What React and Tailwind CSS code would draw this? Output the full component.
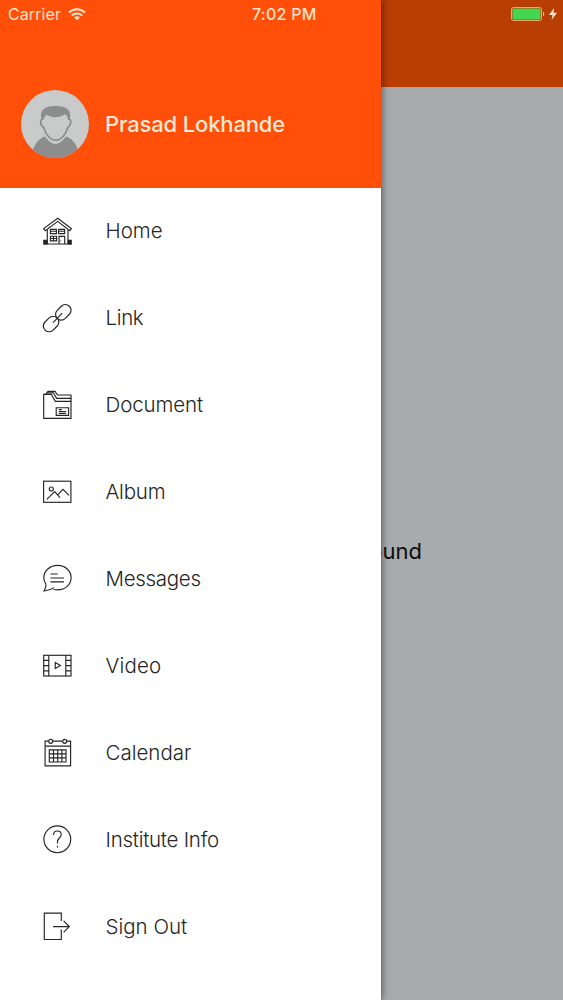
import React from 'react';

const HomeIcon = () => (
  <>
    <path d="M1.6 12.6 L15.7 2.2 L29.4 12.6 L27.8 14.6 L15.7 5.4 L3.3 14.6 Z" />
    <path d="M5.3 13.4 V28 M26 13.4 V28 M1.5 28 H29.5" />
    <path d="M8.4 13.4 h6 v4.2 h-6 Z M16.6 13.4 h6 v4.2 h-6 Z M8.4 15.2 h6 M16.6 15.2 h6" />
    <path d="M8.4 20.2 h6.2 v4.6 h-6.2 Z M11.5 20.2 v4.6 M8.4 22.5 h6.2" />
    <path d="M17 28 V20.4 H22.7 V28 M18.6 24.5 v0.8" />
    <path d="M1.8 24.4 h3.2 v3.4 h-3.2 Z M26.2 24.4 h3 v3.4 h-3 Z" fill="currentColor" />
  </>
);

const LinkIcon = () => (
  <>
    <rect x="12.7" y="3.6" width="17.2" height="11.4" rx="5.7" transform="rotate(-45 21.3 9.3)" />
    <rect x="0.5" y="15.3" width="17.2" height="11.4" rx="5.7" transform="rotate(-45 9.1 21)" />
    <path d="M11 19.7 L20.2 10.2" />
  </>
);

const DocumentIcon = () => (
  <>
    <path d="M1.7 28.3 V4.3 H9.3 L13.3 11.3 H29 V28.3 Z" />
    <path d="M3.3 4.3 L4.9 2.8 H11.4 L14.6 8.4 H29 V11.3" />
    <path d="M5 2.7 L6 1.4 H13 L15.6 5 H29 V8.4" />
    <path d="M14.2 17.7 h12.4 v7.6 h-12.4 Z M16.8 19.6 h3 M16.8 21.5 h7.3 M16.8 23.4 h7.3" />
  </>
);

const AlbumIcon = () => (
  <>
    <rect x="1.6" y="4.2" width="27.3" height="21.1" />
    <circle cx="9.3" cy="12" r="2" />
    <path d="M4.8 22.3 L12.7 14.7 L18 20.6 M16 17.6 L21 12.4 L27 18.4" />
  </>
);

const MessagesIcon = () => (
  <>
    <path d="M4.1 20.4 C2.6 18.5 1.8 16.2 1.8 13.8 C1.8 6.9 8 1.4 15.6 1.4 S29.1 6.9 29.1 13.8 S23.2 25.9 15.6 25.9 C14.2 25.9 12.8 25.7 11.5 25.3 M4.1 20.4 C3.9 23 3.1 25.2 2.1 27 C5.5 26.7 9.3 25.6 12 23.6" />
    <path d="M8.4 10 H15.7 M8.4 14 H22 M8.4 17.8 H22" />
  </>
);

const VideoIcon = () => (
  <>
    <rect x="1.7" y="4.3" width="27.3" height="20.7" />
    <path d="M6.8 4.3 V25 M23.8 4.3 V25 M1.7 9.4 H6.8 M1.7 14.6 H6.8 M1.7 19.8 H6.8 M23.8 9.4 H29 M23.8 14.6 H29 M23.8 19.8 H29" />
    <path d="M13.3 11.6 L18.4 14.5 L13.3 17.5 Z" />
  </>
);

const CalendarIcon = () => (
  <>
    <path d="M6.6 3.1 H3.1 V27.9 H28.6 V3.1 H24.7 M10.7 3.1 H20.7 M3.1 8.1 H28.6" />
    <circle cx="8.7" cy="3.3" r="2" />
    <circle cx="22.7" cy="3.3" r="2" />
    <path d="M7.3 11.8 H24 V24 H7.3 Z M7.3 15.9 H24 M7.3 19.9 H24 M11.5 11.8 V24 M15.7 11.8 V24 M19.9 11.8 V24" />
  </>
);

const InfoIcon = () => (
  <>
    <circle cx="15.3" cy="14.3" r="13.4" />
    <path d="M11.6 9.9 C11.6 7.6 13.2 6 15.4 6 S19.2 7.5 19.2 9.7 C19.2 12.8 15.5 13.2 15.5 16.6 V18.4" />
    <path d="M15.5 20.9 V22.5" />
  </>
);

const SignOutIcon = () => (
  <>
    <path d="M19.3 9 V1.1 H2.3 V27.5 H19.3 V17.6" />
    <path d="M11 14.6 H27.2 M21.6 8.8 L27.3 14.6 L21.6 20.4" />
  </>
);

const menuItems = [
  { label: 'Home', icon: HomeIcon, tracking: 'tracking-[0px]' },
  { label: 'Link', icon: LinkIcon, tracking: 'tracking-[-0.35px]' },
  { label: 'Document', icon: DocumentIcon, tracking: 'tracking-[-0.1px]' },
  { label: 'Album', icon: AlbumIcon, tracking: 'tracking-[-0.2px]' },
  { label: 'Messages', icon: MessagesIcon, tracking: 'tracking-[-0.3px]' },
  { label: 'Video', icon: VideoIcon, tracking: 'tracking-[0.15px]' },
  { label: 'Calendar', icon: CalendarIcon, tracking: 'tracking-[0px]' },
  { label: 'Institute Info', icon: InfoIcon, tracking: 'tracking-[-0.25px]' },
  { label: 'Sign Out', icon: SignOutIcon, tracking: 'tracking-[0px]' }
];

const Avatar = () => (
  <svg viewBox="0 0 68 68" className="h-[68px] w-[68px] shrink-0">
    <defs>
      <clipPath id="avatar-clip">
        <circle cx="34" cy="34" r="34" />
      </clipPath>
    </defs>
    <g clipPath="url(#avatar-clip)">
      <rect width="68" height="68" fill="#c9cbca" />
      {/* Shoulders */}
      <path d="M10 68 C12 55 17 49 24 46.5 C27 51 31 54 34.5 54 C38 54 42 51 45 46.5 C52 49 57 55 59 68 Z" fill="#8c8d8c" />
      {/* Head */}
      <path
        d="M21.5 29 C18.8 29.5 19 35.5 22.7 37.5 C24.5 44 29 50.2 34.7 50.2 S45 44 46.8 37.5 C50.4 35.5 50.6 29.5 48 29"
        fill="#c9cbca"
        stroke="#8c8d8c"
        strokeWidth="1.7"
      />
      <path d="M20.8 30 C17.5 19 25 16 34.5 16 S51.5 19 48.7 30 L47 30 C46.8 27 45.8 25.5 44.2 24.3 C38 28 31 28 25.5 24.8 C23.5 26.8 22.6 28 22.5 30 Z" fill="#8c8d8c" />
    </g>
  </svg>
);

const StatusBar = () => (
  <div className="absolute inset-x-0 top-0 z-20 flex h-7 items-center pr-[6px] pl-2 text-[#ffe3cd]">
    <div className="flex w-[244px] items-center gap-[7px]">
      <span className="text-[16px] tracking-[0.1px]">Carrier</span>
      <svg viewBox="0 0 18 13" className="h-[13px] w-[18px]" fill="none" stroke="currentColor" strokeWidth="2">
        <path d="M1 4.6 C5.5 0.2 12.5 0.2 17 4.6 M3.8 7.5 C6.8 4.7 11.2 4.7 14.2 7.5" />
        <path d="M9 12.3 L6 9.4 C7.8 7.9 10.2 7.9 12 9.4 Z" fill="currentColor" stroke="none" />
      </svg>
    </div>
    <span className="text-[16px] font-medium tracking-[0.25px]">7:02 PM</span>
    <div className="flex flex-1 items-center justify-end gap-1">
      <svg viewBox="0 0 34 14" className="h-[14px] w-[34px]">
        <rect x="0.5" y="0.5" width="30" height="13" rx="2" fill="none" stroke="#f2a76d" />
        <rect x="1.5" y="1.5" width="28" height="11" rx="1" fill="#44d650" />
        <path d="M32 5 C33.6 5.4 33.6 8.6 32 9 Z" fill="currentColor" />
      </svg>
      <svg viewBox="0 0 8 12" className="h-3 w-2" fill="currentColor">
        <path d="M5 0 L0 7 H3.4 L2.6 12 L8 4.8 H4.5 Z" />
      </svg>
    </div>
  </div>
);

export default function App() {
  return (
    <div className="relative flex h-[1000px] w-[563px] overflow-hidden font-['Inter',sans-serif]">
      <StatusBar />

      {/* Drawer */}
      <aside className="z-10 flex w-[381px] shrink-0 flex-col bg-white shadow-[1px_0_7px_rgba(0,0,0,0.5)]">
        <header className="flex h-[188px] items-end gap-4 bg-[#ff4f08] pb-[30px] pl-[21px]">
          <Avatar />
          <span className="mb-[18px] text-[22px] leading-8 font-medium tracking-[-0.15px] text-[#ffe8d6]">
            Prasad Lokhande
          </span>
        </header>
        <nav className="flex flex-col">
          {menuItems.map(({ label, icon: Icon, tracking }) => (
            <a key={label} className="flex h-[87px] items-center gap-[32.5px] pl-[42px] text-[#252525]">
              <svg
                viewBox="0 0 31 31"
                className="h-[31px] w-[31px] shrink-0"
                fill="none"
                stroke="currentColor"
                strokeWidth="1.15"
              >
                <Icon />
              </svg>
              <span className={`mb-[2px] text-[20.5px] leading-8 font-light ${tracking}`}>{label}</span>
            </a>
          ))}
        </nav>
      </aside>

      {/* Dimmed page behind the drawer */}
      <main className="flex min-w-0 flex-1 flex-col bg-[#a8abad]">
        <div className="h-[87px] bg-[#b93e04]" />
        <div className="flex flex-1 items-center justify-end pr-[141px]">
          <p className="mb-[-16px] text-[22px] whitespace-nowrap text-[#0c0c0d]">No Data Found</p>
        </div>
      </main>
    </div>
  );
}
